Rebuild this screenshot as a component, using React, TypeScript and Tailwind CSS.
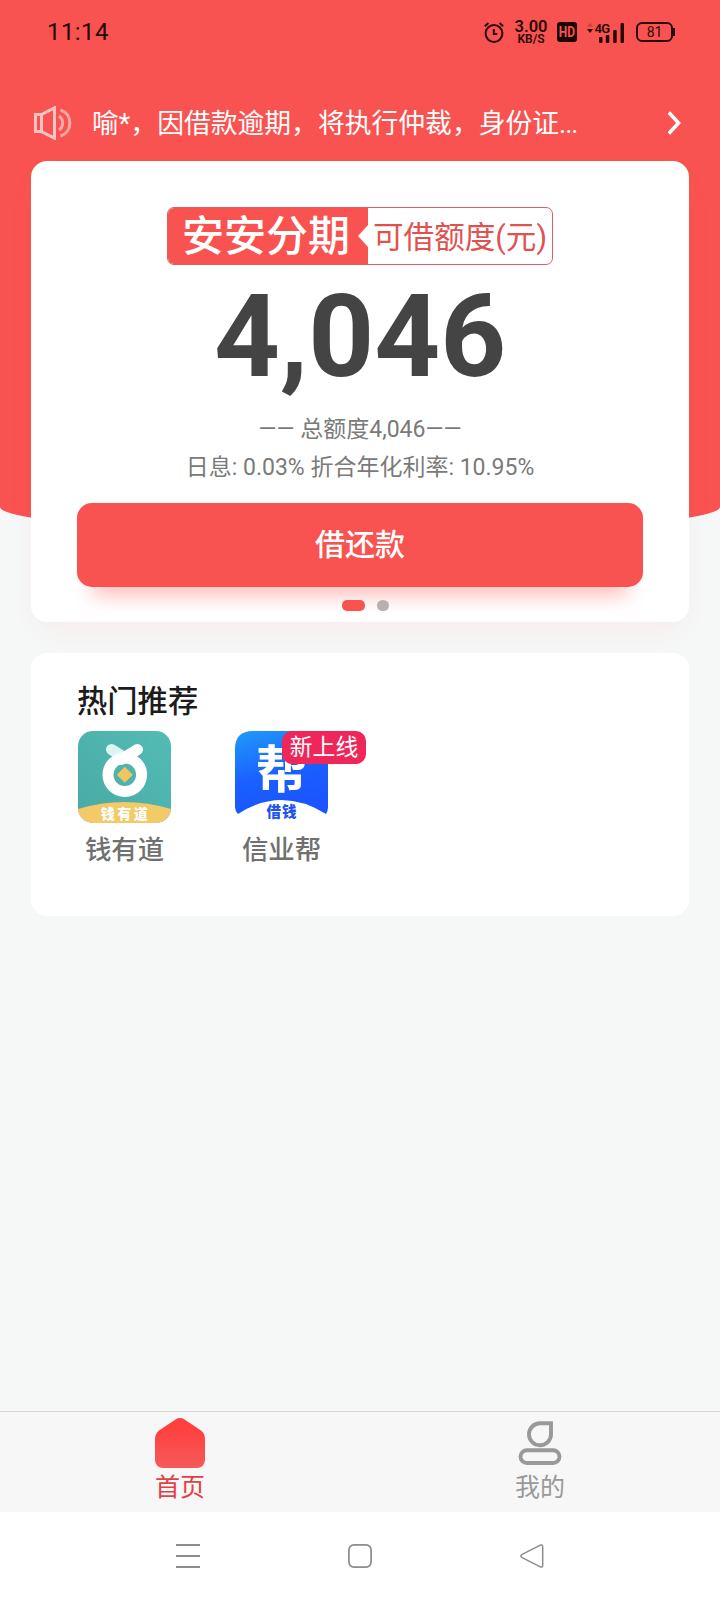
import React from 'react';

const APPS = [
  { name: '钱有道', icon: <QianIcon /> },
  { name: '信业帮', icon: <BangIcon />, badge: '新上线' },
];

function StatusBar() {
  return (
    <div className="flex h-16 items-center justify-between pr-[45px] pl-[47px] text-[#2a0808]">
      <span className="text-[24px] leading-none tracking-[0.4px]">11:14</span>
      <div className="flex items-center">
        <svg className="h-[21px] w-[20px]" viewBox="0 0 20 21" fill="none" stroke="currentColor" strokeWidth="2">
          <circle cx="10" cy="11.5" r="8.4" />
          <path d="M9.8 7v5h3.4M0.8 4.2 4.4 1M19.2 4.2 15.6 1" />
        </svg>
        <div className="ml-[10px] flex w-[34px] flex-col items-center font-semibold">
          <span className="text-[16.500px] leading-[14px]">3.00</span>
          <span className="text-[12px] leading-[11px]">KB/S</span>
        </div>
        <div className="ml-[9px] flex h-5 w-5 items-center justify-center rounded-[3px] bg-[#1a0303]">
          <span className="scale-y-115 text-[12px] leading-none font-bold text-[#f85350]">HD</span>
        </div>
        <svg className="ml-[10px] h-[21px] w-[38px]" viewBox="0 0 38 21" fill="currentColor">
          <path d="M0 7h6L3 11z" />
          <path d="M0 4.500h6L3 1z" opacity=".25" />
          <text x="7.500" y="10.500" fontSize="13" fontWeight="600" textLength="15.500">4G</text>
          <rect x="12" y="15" width="3.500" height="6" rx="1" />
          <rect x="18.800" y="13" width="3.500" height="8" rx="1" />
          <rect x="26.200" y="8" width="3.500" height="13" rx="1" />
          <rect x="33.500" y="1" width="3.500" height="20" rx="1" />
        </svg>
        <div className="ml-[11px] flex h-5 w-[37px] items-center justify-center rounded-[6px] border-2 border-[#2a0808] text-[14px] leading-none">
          81
        </div>
        <div className="h-2 w-[2px] bg-[#2a0808]" />
      </div>
    </div>
  );
}

function Notice() {
  return (
    <div className="flex h-[97px] items-center pt-[21px] pr-[39px] pl-[34px] text-white">
      <svg className="h-[34px] w-[38px]" viewBox="0 0 38 34" fill="none" stroke="#ffc4c2" strokeWidth="3">
        <path d="M1.500 8.500h6v17h-6zM7.500 8.500 20.500 1.800v30.400l-13-6.700z" />
        <path d="M25 10a8.500 8.500 0 0 1 0 14M26.500 4c12.500 4 12.500 22 0 26" opacity=".75" />
      </svg>
      <span className="mt-[2px] ml-5 flex-1 text-[26.800px] leading-9 whitespace-nowrap">
        喻*，因借款逾期，将执行仲裁，身份证<span className="tracking-[-1px]">...</span>
      </span>
      <svg className="h-6 w-[13px]" viewBox="0 0 13 24" fill="none" stroke="white" strokeWidth="3.600">
        <path d="M.8 1.500 10.500 12 .8 22.500" />
      </svg>
    </div>
  );
}

function CreditCard() {
  return (
    <section className="flex h-[461px] flex-col items-center rounded-2xl bg-white pt-[46px] shadow-[0_16px_30px_-6px_rgba(248,83,80,0.07)]">
      <div className="flex h-[58px] w-[386px] overflow-hidden rounded-[7px] border border-[#d9605e]">
        <div className="flex w-[200px] items-center justify-between bg-[#f85350] pl-[14px]">
          <span className="pt-[2px] text-[42px] leading-none font-medium text-white">安安分期</span>
          <svg className="h-[22px] w-[10px]" viewBox="0 0 10 22" fill="white">
            <path d="M10 0v22L0 11z" />
          </svg>
        </div>
        <span className="pl-[5px] text-[30.600px] leading-[60px] whitespace-nowrap text-[#e0524f]">可借额度(元)</span>
      </div>
      <div className="mt-[12px] text-[115px] leading-[120px] font-bold text-[#444]">4,046</div>
      <p className="mt-[14px] text-[23px] leading-[38px] text-[#7a7a7a]">—— 总额度4,046——</p>
      <p className="text-[23px] leading-[38px] text-[#7a7a7a]">日息: 0.03% 折合年化利率: 10.95%</p>
      <button className="mt-4 h-[84px] w-[566px] rounded-[15px] bg-[#f85350] pb-[2px] text-[30px] font-medium text-white shadow-[0_24px_20px_-16px_rgba(248,83,80,0.4)]">
        借还款
      </button>
      <div className="mt-[13px] flex gap-3 pl-[11px]">
        <span className="h-[11px] w-[23px] rounded-[5px] bg-[#f85350]" />
        <span className="h-[11px] w-3 rounded-full bg-[#b8b0b0]" />
      </div>
    </section>
  );
}

function QianIcon() {
  return (
    <svg className="h-[92px] w-[93px] rounded-[15px]" viewBox="0 0 93 92">
      <defs>
        <linearGradient id="teal" x1="0" y1="1" x2="1" y2="0">
          <stop offset="0" stopColor="#48aaa3" />
          <stop offset="1" stopColor="#53bcb5" />
        </linearGradient>
      </defs>
      <rect width="93" height="92" fill="url(#teal)" />
      <path d="M33.500 18.500 47 27" stroke="#dcf4f2" strokeWidth="11" strokeLinecap="round" />
      <path d="M43 28.500 59.500 18.500" stroke="white" strokeWidth="11" strokeLinecap="round" />
      <circle cx="46.800" cy="43.800" r="16.800" fill="none" stroke="white" strokeWidth="11" />
      <path d="M46.800 36.300 54.300 43.800l-7.500 7.500-7.500-7.500z" fill="#f2c45f" stroke="#f2c45f" strokeLinejoin="round" />
      <path d="M0 78Q46 64 93 78V92H0z" fill="#f4c967" />
      <text x="47.500" y="87.500" textAnchor="middle" fontSize="14" fontWeight="900" letterSpacing="2.500" fill="white">
        钱有道
      </text>
    </svg>
  );
}

function BangIcon() {
  return (
    <svg className="h-[92px] w-[93px]" viewBox="0 0 93 92">
      <defs>
        <linearGradient id="blue" x1="0" y1="0" x2=".3" y2="1">
          <stop offset="0" stopColor="#209af9" />
          <stop offset=".6" stopColor="#1a60ff" />
          <stop offset="1" stopColor="#1a55ff" />
        </linearGradient>
      </defs>
      <path d="M18 0H75Q93 0 93 18V76Q93 80 91 83Q46 55 3 83Q0 80 0 76V18Q0 0 18 0z" fill="url(#blue)" />
      <text x="46.500" y="57" textAnchor="middle" fontSize="51" fontWeight="700" fill="white">帮</text>
      <text x="47" y="86" textAnchor="middle" fontSize="14.500" fontWeight="900" letterSpacing="1" fill="#2052f0">
        借钱
      </text>
    </svg>
  );
}

function HotList() {
  return (
    <section className="mt-[31px] h-[263px] rounded-2xl bg-white pt-8 pl-[47px]">
      <h2 className="-ml-px text-[30.300px] leading-[34px] font-medium text-[#1c1c1c]">热门推荐</h2>
      <div className="mt-3 flex gap-16">
        {APPS.map((app) => (
          <div key={app.name} className="relative flex w-[93px] flex-col items-center">
            {app.icon}
            <span className="mt-[10px] text-[26.400px] leading-[34px] font-medium whitespace-nowrap text-[#707070]">{app.name}</span>
            {app.badge && (
              <span className="absolute top-0 left-[47px] h-[33px] w-[84px] rounded-[10px] bg-[#ee2659] text-center text-[22.800px] leading-[33px] whitespace-nowrap text-white">
                {app.badge}
              </span>
            )}
          </div>
        ))}
      </div>
    </section>
  );
}

function TabBar() {
  return (
    <nav className="grid h-[101px] grid-cols-2 border-t border-[#d6d6d6] bg-[#f7f7f7] text-[25px] leading-8">
      <div className="flex flex-col items-center pt-[6px] text-[#e04145]">
        <svg className="h-[50px] w-[50px]" viewBox="0 0 50 50">
          <defs>
            <linearGradient id="home" x1="0" y1="0" x2="0" y2="1">
              <stop offset=".2" stopColor="#ff403f" />
              <stop offset="1" stopColor="#f55a5b" />
            </linearGradient>
          </defs>
          <path d="M20.500 1.400Q25-1.400 29.500 1.400L46 12.500Q50 15.500 50 21V42A8 8 0 0 1 42 50H8A8 8 0 0 1 0 42V21Q0 15.500 4 12.500z" fill="url(#home)" />
        </svg>
        <span className="mt-1">首页</span>
      </div>
      <div className="flex flex-col items-center pt-[9px] text-[#999]">
        <svg className="h-[44px] w-[44px]" viewBox="0 0 44 44" fill="none" stroke="currentColor" strokeWidth="3.900">
          <path d="M22 2.300H33V13.500A11 11 0 1 1 22 2.300z" />
          <rect x="2.500" y="29.200" width="39" height="12.800" rx="6.400" />
        </svg>
        <span className="mt-[7px]">我的</span>
      </div>
    </nav>
  );
}

function SystemNav() {
  return (
    <div className="flex h-[88px] items-center justify-between bg-white pr-[176px] pl-[176px] text-[#8c8c8c]">
      <svg className="h-6 w-6" viewBox="0 0 24 24" stroke="currentColor" strokeWidth="2">
        <path d="M0 1h24M0 12h24M0 23h24" />
      </svg>
      <svg className="h-6 w-6" viewBox="0 0 24 24" fill="none" stroke="currentColor" strokeWidth="1.700">
        <rect x=".9" y=".9" width="22.200" height="22.200" rx="5" />
      </svg>
      <svg className="h-6 w-6" viewBox="0 0 24 24" fill="none" stroke="currentColor" strokeWidth="1.500">
        <path d="M2.200 10.300 20.300 1.200Q22.700.2 22.700 2.800V21.200Q22.700 23.800 20.300 22.800L2.200 13.700Q-.5 12 2.200 10.300z" />
      </svg>
    </div>
  );
}

export default function App() {
  return (
    <div lang="zh-CN" className="flex h-[1600px] w-[720px] flex-col overflow-hidden bg-[#f6f8f8] font-[Roboto,'Noto_Sans_CJK_SC',sans-serif]">
      <header className="h-[533px] shrink-0 rounded-b-[50%_26px] bg-[#f85350]">
        <StatusBar />
        <Notice />
      </header>
      <main className="-mt-[372px] flex-1 px-[31px]">
        <CreditCard />
        <HotList />
      </main>
      <TabBar />
      <SystemNav />
    </div>
  );
}
